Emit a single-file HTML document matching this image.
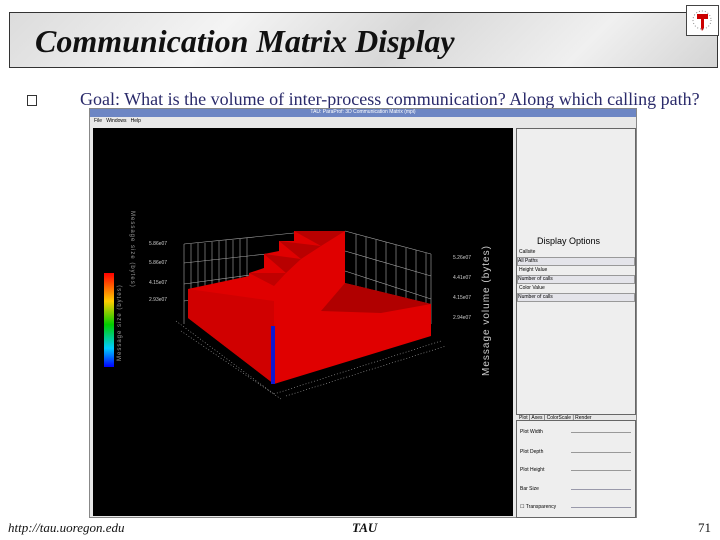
<!DOCTYPE html>
<html><head><meta charset="utf-8"><style>
body{margin:0;width:720px;height:540px;background:#fff;position:relative;overflow:hidden;font-family:"Liberation Serif",serif}
.hdr{position:absolute;left:9px;top:12px;width:707px;height:54px;border:1px solid #333;background:linear-gradient(135deg,#dcdcdc,#f4f4f4 30%,#d8d8d8 55%,#f0f0f0 80%,#d4d4d4)}
.hdr h1{margin:0;position:absolute;left:25px;top:10px;font-size:32px;font-style:italic;font-weight:bold;color:#111}
.logo{position:absolute;left:686px;top:5px;width:31px;height:29px;border:1px solid #444;background:#fff}
.goal{position:absolute;left:80px;top:89px;font-size:18px;color:#2a2a6a;white-space:nowrap}
.bul{position:absolute;left:27px;top:95px;width:8px;height:9px;border:1px solid #333}
.win{position:absolute;left:89px;top:108px;width:546px;height:408px;background:#e8e8e8;border:1px solid #888}
.tb{position:absolute;left:0;top:0;width:546px;height:8px;background:#6d86c4;color:#fff;font:5px "Liberation Sans",sans-serif;text-align:center}
.mn{position:absolute;left:4px;top:9px;font:5px "Liberation Sans",sans-serif}
.blk{position:absolute;left:3px;top:19px;width:420px;height:388px;background:#000}
.rp{position:absolute;left:426px;top:19px;width:118px;height:285px;border:1px solid #666;background:#eee;font:5px "Liberation Sans",sans-serif}
.sel{position:absolute;left:0;width:116px;height:7px;background:#e4e4ea;border:1px solid #999}
.rp2{position:absolute;left:426px;top:311px;width:118px;height:96px;border:1px solid #666;background:#eee;font:5px "Liberation Sans",sans-serif}
.foot{position:absolute;top:520px;font-size:13px;font-style:italic;color:#111}
</style></head><body>
<div class="hdr"><h1>Communication Matrix Display</h1></div>
<div class="logo"><svg width="31" height="29"><path d="M10 8h11v5h-4v9l-2 3-1-3v-9h-4z" fill="#c00"/><circle cx="15" cy="14" r="9" fill="none" stroke="#888" stroke-dasharray="1 2"/></svg></div>
<div class="bul"></div>
<div class="goal">Goal: What is the volume of inter-process communication? Along which calling path?</div>
<div class="win">
<div class="tb">TAU: ParaProf: 3D Communication Matrix (mpi)</div>
<div class="mn">File &nbsp; Windows &nbsp; Help</div>
<div class="blk">
<svg width="420" height="388" viewBox="92 127 420 388">
<g stroke="#aaa" stroke-width="0.6" fill="none">
<path d="M183 243L293 232M183 262L293 250M183 283L293 268M183 300L293 285M183 243v80M430 253v70M344 230L430 253M344 250L430 275M344 270L430 298"/>
<path d="M190 243v75M197 242v77M204 242v77M211 241v78M218 240v79M225 239v80M232 239v80M239 238v80M246 237v80M355 233v60M365 236v60M375 239v60M385 241v60M395 244v60M405 247v60M415 249v60M425 252v60"/>
<path d="M175 320L273 393M180 330L280 398M273 393L440 340M285 395L445 345" stroke-dasharray="1 2"/>
</g>
<polygon points="187,288 248,275 248,272 263,267 263,253 278,250 278,240 293,240 293,230 344,230 344,282 430,303 430,335 273,383 187,317" fill="#e00000"/>
<polygon points="187,288 273,300 273,383 187,317" fill="#d00000"/>
<polygon points="293,230 344,230 320,245" fill="#b80000"/>
<polygon points="278,240 320,245 300,258" fill="#b80000"/>
<polygon points="263,253 300,258 285,272" fill="#b80000"/>
<polygon points="248,272 285,272 273,285" fill="#c00000"/>
<polygon points="320,310 344,282 430,303 380,312" fill="#b00000"/>
<rect x="270" y="325" width="4" height="58" fill="#1018d0"/>
<defs><linearGradient id="g" x1="0" y1="0" x2="0" y2="1"><stop offset="0" stop-color="#f00"/><stop offset=".3" stop-color="#fc0"/><stop offset=".55" stop-color="#0c0"/><stop offset=".8" stop-color="#0cf"/><stop offset="1" stop-color="#00f"/></linearGradient></defs>
<rect x="103" y="272" width="10" height="94" fill="url(#g)"/>
<g fill="#ccc" font-family="Liberation Sans" font-size="5"><text x="148" y="244">5.86e07</text><text x="148" y="263">5.86e07</text><text x="148" y="283">4.15e07</text><text x="148" y="300">2.93e07</text><text x="452" y="258">5.26e07</text><text x="452" y="278">4.41e07</text><text x="452" y="298">4.15e07</text><text x="452" y="318">2.94e07</text></g>
<text x="0" y="0" fill="#ccc" font-family="Liberation Sans" font-size="10" transform="translate(488,375) rotate(-90)" letter-spacing="1">Message volume (bytes)</text>
<text x="0" y="0" fill="#999" font-family="Liberation Sans" font-size="6" transform="translate(130,210) rotate(90)" letter-spacing="1">Message size (bytes)</text>
<text x="0" y="0" fill="#999" font-family="Liberation Sans" font-size="6" transform="translate(120,360) rotate(-90)" letter-spacing="1">Message size (bytes)</text>
</svg></div>
<div class="rp"><div style="position:absolute;top:107px;left:20px;font-size:9px">Display Options</div>
<div style="position:absolute;top:120px;left:2px">Callsite</div><div class="sel" style="top:128px">All Paths</div>
<div style="position:absolute;top:138px;left:2px">Height Value</div><div class="sel" style="top:146px">Number of calls</div>
<div style="position:absolute;top:156px;left:2px">Color Value</div><div class="sel" style="top:164px">Number of calls</div></div>
<div class="rp2">
<div style="position:absolute;top:-6px;left:2px">Plot | Axes | ColorScale | Render</div>
<div style="position:absolute;top:8px;left:3px">Plot Width</div><div style="position:absolute;top:28px;left:3px">Plot Depth</div><div style="position:absolute;top:46px;left:3px">Plot Height</div><div style="position:absolute;top:65px;left:3px">Bar Size</div><div style="position:absolute;top:83px;left:3px">☐ Transparency</div>
<div style="position:absolute;left:54px;top:11px;width:60px;border-top:1px solid #999"></div><div style="position:absolute;left:54px;top:31px;width:60px;border-top:1px solid #999"></div><div style="position:absolute;left:54px;top:49px;width:60px;border-top:1px solid #999"></div><div style="position:absolute;left:54px;top:68px;width:60px;border-top:1px solid #99a"></div><div style="position:absolute;left:54px;top:86px;width:60px;border-top:1px solid #99a"></div>
</div>
</div>
<div class="foot" style="left:8px">http://tau.uoregon.edu</div>
<div class="foot" style="left:352px;font-weight:bold">TAU</div>
<div class="foot" style="left:698px;font-style:normal">71</div>
</body></html>
